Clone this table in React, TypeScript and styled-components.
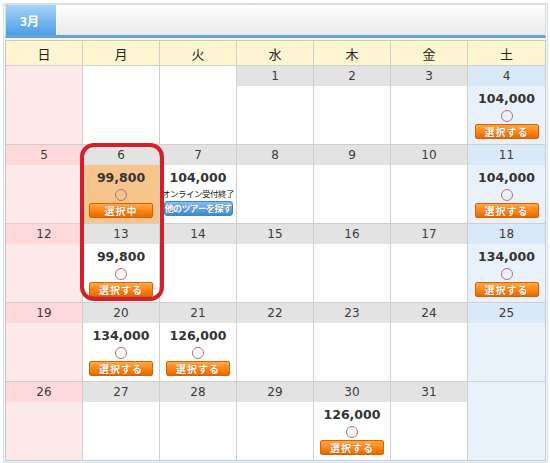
import styled, { createGlobalStyle } from "styled-components";

type Status = "select" | "selected" | "closed";

interface Day {
  day?: number;
  price?: string;
  status?: Status;
}

const GlobalStyle = createGlobalStyle`
  body {
    margin: 0;
    background: #fff;
    font-family: "DejaVu Sans", "Noto Sans CJK JP", sans-serif;
  }
`;

const Frame = styled.div`
  box-sizing: border-box;
  width: 545px;
  margin: 3px 0 0 3px;
  border: 1px solid #d6e1ea;
  padding: 0 1px 1px 1px;
  background: #f2f6fa;
`;

const TabBar = styled.div`
  display: flex;
  height: 34px;
  box-sizing: border-box;
  background: linear-gradient(#ffffff, #e9e9e9);
  border: 1px solid #d9dee3;
  border-bottom: 3px solid #6aa2d6;
`;

const Tab = styled.div`
  width: 51px;
  display: flex;
  align-items: center;
  padding-left: 14px;
  box-sizing: border-box;
  background: linear-gradient(#a6d4f9, #4d9de6);
  color: #fff;
  font: bold 12px "Noto Sans CJK JP", sans-serif;
  border-right: 1px solid #fff;
`;

const Calendar = styled.div`
  position: relative;
  margin-top: 2px;
  display: grid;
  grid-template-columns: repeat(7, 1fr);
  border: 1px solid #c9c9c9;
  background: #fff;
`;

const HeadCell = styled.div<{ $last: boolean }>`
  height: 24px;
  display: flex;
  align-items: center;
  justify-content: center;
  background: #fff5d1;
  border-right: ${({ $last }) => ($last ? "none" : "1px solid #cfcfcf")};
  font: 13px "Noto Sans CJK JP", sans-serif;
  color: #222;
`;

const Cell = styled.div<{ $last: boolean; $bg: string }>`
  height: 79px;
  box-sizing: border-box;
  border-top: 1px solid #cfcfcf;
  border-right: ${({ $last }) => ($last ? "none" : "1px solid #cfcfcf")};
  background: ${({ $bg }) => $bg};
  display: flex;
  flex-direction: column;
`;

const DateStrip = styled.div<{ $bg: string }>`
  height: 20px;
  flex: none;
  display: flex;
  align-items: center;
  justify-content: center;
  background: ${({ $bg }) => $bg};
  font-size: 12px;
  color: #3a3a3a;
`;

const Body = styled.div<{ $bg: string }>`
  flex: 1;
  background: ${({ $bg }) => $bg};
  display: flex;
  flex-direction: column;
  align-items: center;
  padding-top: 5px;
`;

const Price = styled.div`
  font-weight: bold;
  font-size: 12.5px;
  color: #333;
  line-height: 16px;
`;

const Circle = styled.div`
  width: 10px;
  height: 10px;
  margin: 3px 0 2px;
  border-radius: 50%;
  border: 1px solid #b86c86;
`;

const Button = styled.div<{ $blue?: boolean }>`
  box-sizing: border-box;
  height: 15px;
  width: ${({ $blue }) => ($blue ? "69px" : "64px")};
  display: flex;
  align-items: center;
  justify-content: center;
  white-space: nowrap;
  border-radius: ${({ $blue }) => ($blue ? "3px" : "2px")};
  border: 1px solid ${({ $blue }) => ($blue ? "#3d86cc" : "#d86200")};
  background: ${({ $blue }) =>
    $blue
      ? "linear-gradient(#7cc0f5, #3a8ad8)"
      : "linear-gradient(#ffa84a 0%, #ff8a1a 45%, #e86800 100%)"};
  color: #fff;
  font: bold ${({ $blue }) => ($blue ? "9px" : "10px")} "Noto Sans CJK JP", sans-serif;
  letter-spacing: ${({ $blue }) => ($blue ? "-0.6px" : "1px")};
  text-shadow: 0 0 1px rgba(120, 50, 0, 0.6);
`;

const Note = styled.div`
  font: 8.5px "Noto Sans CJK JP", sans-serif;
  color: #222;
  white-space: nowrap;
  letter-spacing: -0.5px;
  margin: 1px 0 2px;
  line-height: 12px;
`;

const Highlight = styled.div`
  position: absolute;
  left: 74px;
  top: 102px;
  width: 84px;
  height: 158px;
  box-sizing: border-box;
  border: 4px solid #d4202b;
  border-radius: 14px;
  pointer-events: none;
`;

const weekdays = ["日", "月", "火", "水", "木", "金", "土"];

const weeks: Day[][] = [
  [{}, {}, {}, { day: 1 }, { day: 2 }, { day: 3 }, { day: 4, price: "104,000", status: "select" }],
  [
    { day: 5 },
    { day: 6, price: "99,800", status: "selected" },
    { day: 7, price: "104,000", status: "closed" },
    { day: 8 },
    { day: 9 },
    { day: 10 },
    { day: 11, price: "104,000", status: "select" },
  ],
  [
    { day: 12 },
    { day: 13, price: "99,800", status: "select" },
    { day: 14 },
    { day: 15 },
    { day: 16 },
    { day: 17 },
    { day: 18, price: "134,000", status: "select" },
  ],
  [
    { day: 19 },
    { day: 20, price: "134,000", status: "select" },
    { day: 21, price: "126,000", status: "select" },
    { day: 22 },
    { day: 23 },
    { day: 24 },
    { day: 25 },
  ],
  [
    { day: 26 },
    { day: 27 },
    { day: 28 },
    { day: 29 },
    { day: 30, price: "126,000", status: "select" },
    { day: 31 },
    {},
  ],
];

function colors(col: number) {
  if (col === 0) return { strip: "#ffd9d9", body: "#fde9e9" };
  if (col === 6) return { strip: "#d8e9f9", body: "#e9f1fb" };
  return { strip: "#e3e3e3", body: "#ffffff" };
}

function DayCell({ d, col }: { d: Day; col: number }) {
  const c = colors(col);
  const last = col === 6;
  if (d.day === undefined) return <Cell $last={last} $bg={c.body} />;
  const bodyBg = d.status === "selected" ? "#f6c58c" : c.body;
  return (
    <Cell $last={last} $bg={c.body}>
      <DateStrip $bg={c.strip}>{d.day}</DateStrip>
      <Body $bg={bodyBg}>
        {d.price && <Price>{d.price}</Price>}
        {d.status === "closed" ? (
          <>
            <Note>オンライン受付終了</Note>
            <Button $blue>他のツアーを探す</Button>
          </>
        ) : d.status ? (
          <>
            <Circle />
            <Button>{d.status === "selected" ? "選択中" : "選択する"}</Button>
          </>
        ) : null}
      </Body>
    </Cell>
  );
}

export default function App() {
  return (
    <>
      <GlobalStyle />
      <Frame>
        <TabBar>
          <Tab>3月</Tab>
        </TabBar>
        <Calendar>
          {weekdays.map((w, i) => (
            <HeadCell key={w} $last={i === 6}>
              {w}
            </HeadCell>
          ))}
          {weeks.map((week, wi) =>
            week.map((d, i) => <DayCell key={`${wi}-${i}`} d={d} col={i} />)
          )}
          <Highlight />
        </Calendar>
      </Frame>
    </>
  );
}
